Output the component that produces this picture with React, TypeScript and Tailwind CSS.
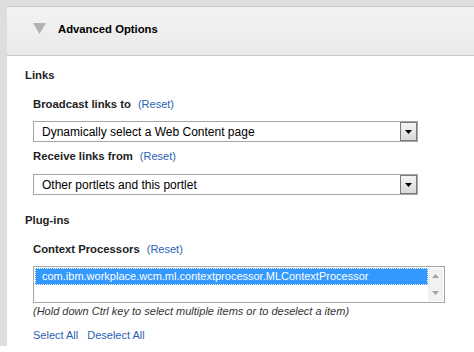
import React from 'react';

function SelectBox({ value }: { value: string }) {
  return (
    <div className="flex h-[21px] w-[385px] items-stretch border border-[#a5a5a5] bg-white">
      <div className="flex flex-1 items-center pl-[8px] text-[12px] leading-[14px] text-black">{value}</div>
      <div className="flex w-[17px] items-center justify-center border border-[#7a7a7a] bg-gradient-to-b from-[#f4f4f4] to-[#d8d8d8]">
        <svg width="7" height="4" viewBox="0 0 7 4">
          <path d="M0 0h7L3.5 4z" fill="#000" />
        </svg>
      </div>
    </div>
  );
}

function Label({ text }: { text: string }) {
  return (
    <div className="flex h-[14px] items-baseline gap-[7px] leading-[14px]">
      <span className="text-[11.3px] font-bold text-[#222]">{text}</span>
      <span className="text-[11px] text-[#2b5fb4]">(Reset)</span>
    </div>
  );
}

export default function App() {
  return (
    <div className="h-[352px] w-[474px] bg-white font-['Liberation_Sans',Arial,sans-serif]">
      <div className="flex h-[346px] flex-col bg-[#dedede] pl-[7px] pt-[6px]">
        <div className="flex flex-1 flex-col bg-white">
          {/* Header */}
          <div className="flex h-[50px] items-center border-y border-[#c9c9c9] bg-gradient-to-b from-[#f4f4f4] to-[#e9e9e9] pb-[5px] pl-[26px]">
            <svg width="13" height="11" viewBox="0 0 13 11">
              <path d="M0 0h13L6.5 11z" fill="#b3b3b3" />
            </svg>
            <span className="ml-[12px] text-[11.3px] font-bold leading-[14px] text-black">Advanced Options</span>
          </div>

          <div className="flex flex-col pl-[18px] pt-[12px]">
            <div className="text-[11.3px] font-bold leading-[14px] text-[#222]">Links</div>

            <div className="mt-[15px] pl-[8px]">
              <Label text="Broadcast links to" />
              <div className="mt-[10px]">
                <SelectBox value="Dynamically select a Web Content page" />
              </div>
              <div className="mt-[7px]">
                <Label text="Receive links from" />
              </div>
              <div className="mt-[11px]">
                <SelectBox value="Other portlets and this portlet" />
              </div>
            </div>

            <div className="mt-[18px] text-[11.3px] font-bold leading-[14px] text-[#222]">Plug-ins</div>

            <div className="mt-[15px] pl-[8px]">
              <Label text="Context Processors" />
              <div className="mt-[10px] flex h-[37px] w-[412px] border border-[#a5a5a5] bg-white p-[1px]">
                <div className="flex-1">
                  <div className="flex h-[17px] items-center border border-dotted border-white bg-[#3399ff] pl-[6px] text-[11px] leading-[13px] text-white">
                    com.ibm.workplace.wcm.ml.contextprocessor.MLContextProcessor
                  </div>
                </div>
                <div className="flex w-[15px] flex-col items-center justify-between bg-[#f1f1f1] py-[6px]">
                  <svg width="7" height="4" viewBox="0 0 7 4">
                    <path d="M0 4h7L3.5 0z" fill="#a6a6a6" />
                  </svg>
                  <svg width="7" height="4" viewBox="0 0 7 4">
                    <path d="M0 0h7L3.5 4z" fill="#a6a6a6" />
                  </svg>
                </div>
              </div>
              <div className="mt-[2px] text-[11px] italic leading-[13px] text-[#333]">
                (Hold down Ctrl key to select multiple items or to deselect a item)
              </div>
              <div className="mt-[11px] flex gap-[9px] text-[11px] leading-[13px] text-[#2b5fb4]">
                <span>Select All</span>
                <span>Deselect All</span>
              </div>
            </div>
          </div>
        </div>
      </div>
    </div>
  );
}
